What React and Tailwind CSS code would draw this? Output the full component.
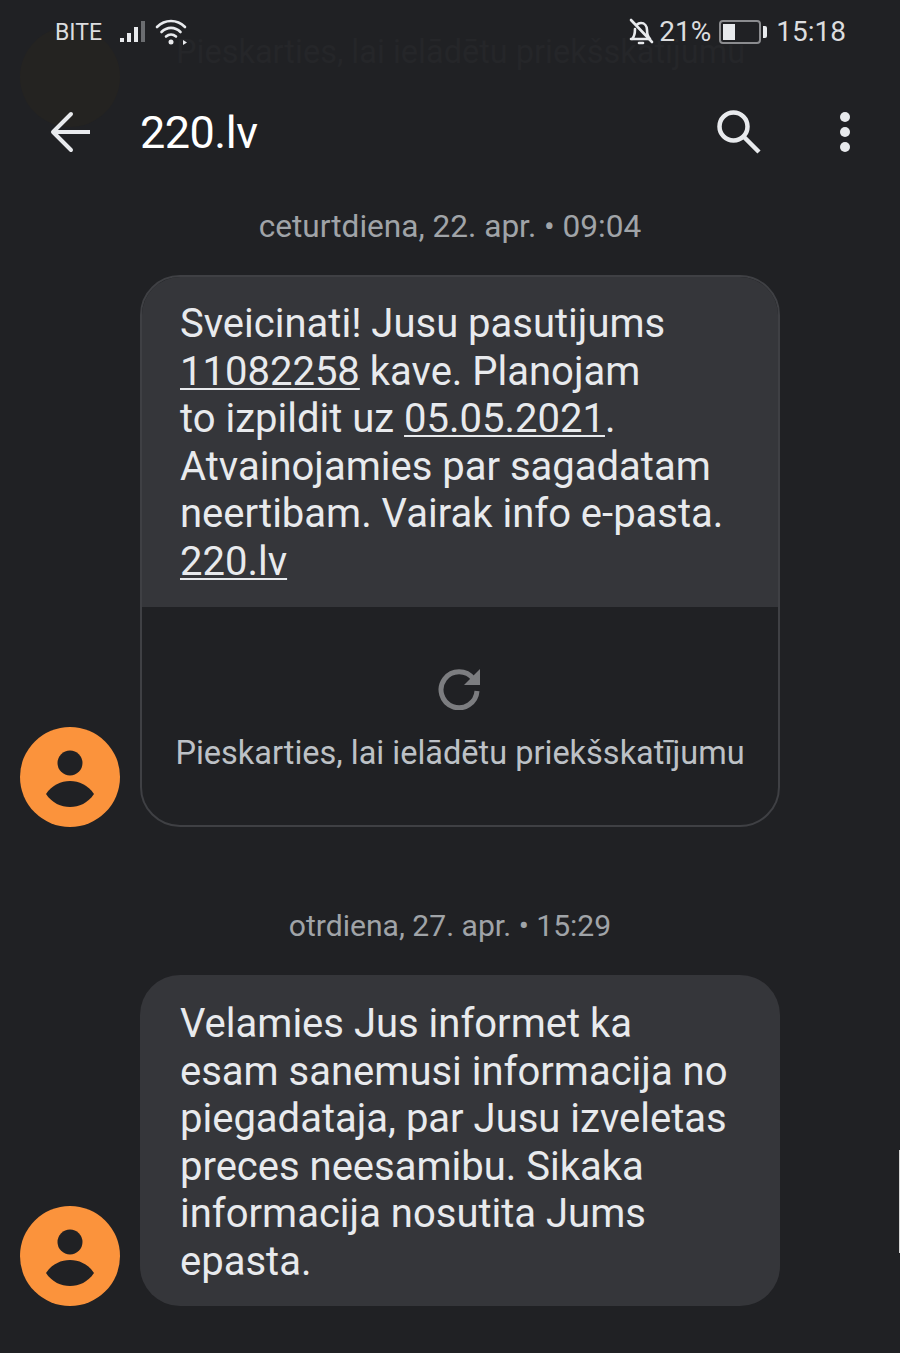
const ROBOTO = "font-['Roboto',sans-serif]";

const Avatar = () => (
  <div className="w-[100px] h-[100px] shrink-0 rounded-full bg-[#fb933c] flex items-center justify-center">
    <svg width="100" height="100" viewBox="0 0 100 100" fill="#202124">
      <circle cx="50" cy="36" r="12.5" />
      <path d="M26 67C32 58 41 54 50 54C59 54 68 58 74 67C68 76 59 80 50 80C41 80 32 76 26 67Z" />
    </svg>
  </div>
);

const Link = ({ children }) => <span className="underline underline-offset-[3px] decoration-2">{children}</span>;

const StatusBar = () => (
  <div className="flex items-center justify-between pl-[55px] pr-[54px] h-[64px] text-[#dcdddf]">
    <div className="flex items-center">
      <span className="text-[23px] leading-none">BITE</span>
      <svg className="ml-[17px]" width="30" height="28" viewBox="0 0 30 28">
        <rect x="1" y="20" width="4" height="4" fill="#e8eaed" />
        <rect x="8" y="15" width="4" height="9" fill="#e8eaed" />
        <rect x="15" y="9" width="4" height="15" fill="#e8eaed" />
        <rect x="22" y="3" width="4" height="21" fill="#6b6d70" />
      </svg>
      <svg className="ml-[6px]" width="34" height="30" viewBox="0 0 34 30" fill="none" stroke="#e8eaed" strokeWidth="2.6" strokeLinecap="round">
        <path d="M2 10C10 2 22 2 30 10" />
        <path d="M6.500 15C12 9.500 20 9.500 25.500 15" />
        <path d="M11 19.500C14 17 18 17 21 19.500" />
        <circle cx="16" cy="25" r="2.500" fill="#e8eaed" stroke="none" />
        <path d="M28 23L32 25.500L28 28Z" fill="#e8eaed" stroke="none" />
      </svg>
    </div>
    <div className="flex items-center">
      <svg width="26" height="28" viewBox="0 0 26 28" fill="none" stroke="#e8eaed" strokeWidth="2.6" strokeLinecap="round" strokeLinejoin="round">
        <path d="M2 21H21C18 18 18 15 18 12C18 8 15.500 5 12 5C10 5 8.500 6 7.500 7M6 11C6 15 6 18 3 21" />
        <path d="M2 2L23 24" />
        <path d="M10 25H14" />
      </svg>
      <span className="ml-[4px] text-[28px] leading-none">21%</span>
      <div className="ml-[8px] flex items-center">
        <div className="w-[42px] h-[24px] rounded-[4px] border-2 border-[#8b8c8f] p-[2px]">
          <div className="w-[12px] h-full bg-[#e8eaed]" />
        </div>
        <div className="ml-[2px] w-[4px] h-[12px] bg-[#e8eaed] rounded-r-[2px]" />
      </div>
      <span className="ml-[9px] text-[28px] leading-none">15:18</span>
    </div>
  </div>
);

const Toolbar = () => (
  <div className="flex items-center h-[140px] pb-[4px]">
    <svg className="ml-[49px]" width="42" height="42" viewBox="0 0 42 42" fill="none" stroke="#e8eaed" strokeWidth="4">
      <path d="M41 21H5" />
      <path d="M22 3L4 21L22 39" strokeLinecap="round" strokeLinejoin="round" />
    </svg>
    <span className="ml-[49px] text-[45px] leading-none text-white tracking-[-0.5px]">220.lv</span>
    <svg className="ml-auto" width="46" height="46" viewBox="0 0 46 46" fill="none" stroke="#e8eaed" strokeWidth="4.500">
      <circle cx="17.500" cy="17.500" r="14" />
      <path d="M27.500 27.500L43 43" />
    </svg>
    <div className="ml-[78px] mr-[50px] flex flex-col gap-[5px]">
      <div className="w-[10px] h-[10px] rounded-full bg-[#e8eaed]" />
      <div className="w-[10px] h-[10px] rounded-full bg-[#e8eaed]" />
      <div className="w-[10px] h-[10px] rounded-full bg-[#e8eaed]" />
    </div>
  </div>
);

const Message = ({ children }) => (
  <div className="px-[40px] pt-[25px] text-[40px] leading-[47.5px] text-[#e8eaed]">{children}</div>
);

export default function App() {
  return (
    <div className={`relative h-[1353px] w-[900px] overflow-hidden bg-[#202124] ${ROBOTO}`}>
      {/* faint ghost of the scrolled content under the header */}
      <div className="absolute left-[20px] top-[27px] w-[100px] h-[100px] rounded-full bg-[#242321]" />
      <p className="absolute left-[176px] top-[35px] text-[32.5px] leading-[34px] text-[#252629] whitespace-nowrap">Pieskarties, lai ielādētu priekšskatījumu</p>

      <header className="relative">
        <StatusBar />
        <Toolbar />
      </header>

      <main className="relative pt-[6px]">
        <p className="text-center text-[31.600px] leading-[34px] text-[#a0a4a8]">ceturtdiena, 22. apr. • 09:04</p>

        <div className="mt-[31px] pl-[20px] flex items-end gap-[20px]">
          <Avatar />
          <div className="w-[640px] rounded-[40px] overflow-hidden border-2 border-[#3f4044]">
            <div className="bg-[#35363a] -m-[2px] mb-0 h-[332px]">
              <Message>
                Sveicinati! Jusu pasutijums
                <br />
                <Link>11082258</Link> kave. Planojam
                <br />
                to izpildit uz <Link>05.05.2021</Link>.
                <br />
                Atvainojamies par sagadatam
                <br />
                neertibam. Vairak info e-pasta.
                <br />
                <Link>220.lv</Link>
              </Message>
            </div>
            <div className="h-[218px] flex flex-col items-center pt-[59px]">
              <svg width="44" height="44" viewBox="0 0 44 44" fill="none">
                <path d="M35.500 13A18 18 0 1 0 39 25" stroke="#7c7d80" strokeWidth="5" />
                <path d="M42 3V19H26Z" fill="#7c7d80" />
              </svg>
              <p className="mt-[26px] text-[32.500px] leading-[34px] text-[#bdc1c6] whitespace-nowrap">Pieskarties, lai ielādētu priekšskatījumu</p>
            </div>
          </div>
        </div>

        <p className="mt-[82px] text-center text-[30.100px] leading-[34px] text-[#a0a4a8]">otrdiena, 27. apr. • 15:29</p>

        <div className="mt-[32px] pl-[20px] flex items-end gap-[20px]">
          <Avatar />
          <div className="w-[640px] h-[331px] rounded-[40px] bg-[#35363a]">
            <Message>
              Velamies Jus informet ka
              <br />
              esam sanemusi informacija no
              <br />
              piegadataja, par Jusu izveletas
              <br />
              preces neesamibu. Sikaka
              <br />
              informacija nosutita Jums
              <br />
              epasta.
            </Message>
          </div>
        </div>
      </main>

      {/* white sliver on the right edge */}
      <div className="absolute right-0 top-[1150px] w-[1px] h-[103px] bg-[#d8d8d8]" />
    </div>
  );
}
